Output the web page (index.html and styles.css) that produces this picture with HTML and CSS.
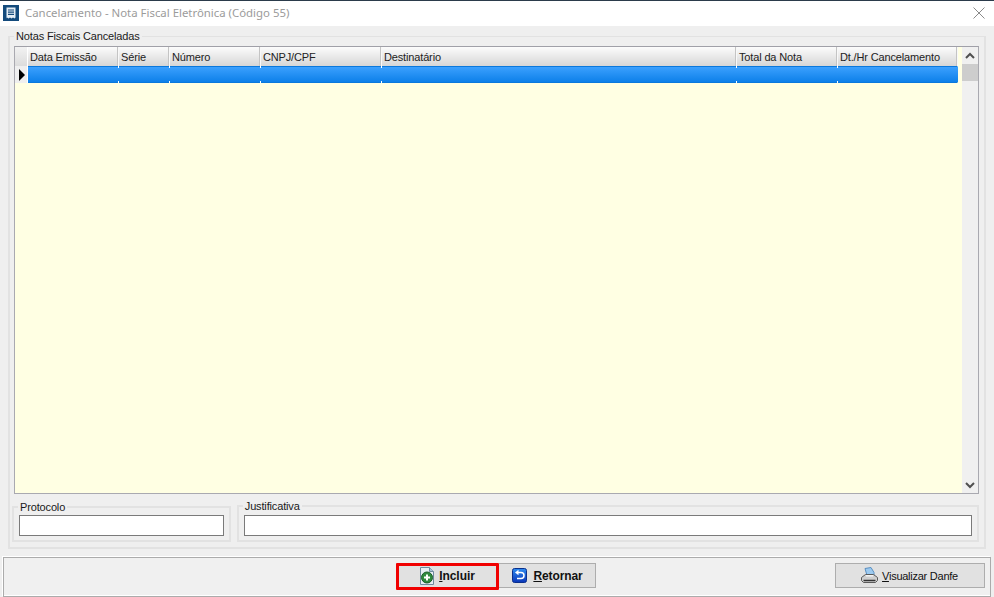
FILE: index.html
```html
<!DOCTYPE html>
<html lang="pt-BR">
<head>
<meta charset="utf-8">
<title>Cancelamento - Nota Fiscal Eletrônica (Código 55)</title>
<link rel="stylesheet" href="styles.css">
</head>
<body>
<div class="window">
  <header class="titlebar">
    <span class="app-icon">
      <svg width="16" height="16" viewBox="0 0 16 16"><path d="M3.500 2.500h9v10l-1 1-1.500-1-1.500 1-1.500-1-1.500 1-1.500-1-.5 1z" fill="#e4edf5"/><path d="M5 5h6M5 7.200h6M5 9.400h6" stroke="#134a7c" stroke-width="1.200"/></svg>
    </span>
    <span class="title">Cancelamento - Nota Fiscal Eletrônica (Código 55)</span>
    <svg class="close" width="12" height="12" viewBox="0 0 12 12"><path d="M.5.5l11 11M11.500.5l-11 11" stroke="#8a8a8a" stroke-width="1" fill="none"/></svg>
  </header>

  <main class="content">
    <section class="group main-group">
      <div class="legend">Notas Fiscais Canceladas</div>
      <div class="grid">
        <div class="grid-table">
          <div class="grid-head">
            <div class="indicator-head"></div>
            <div class="th c1">Data Emissão</div>
            <div class="th c2">Série</div>
            <div class="th c3">Número</div>
            <div class="th c4">CNPJ/CPF</div>
            <div class="th c5">Destinatário</div>
            <div class="th c6">Total da Nota</div>
            <div class="th c7">Dt./Hr Cancelamento</div>
          </div>
          <div class="grid-row">
            <div class="indicator"><span class="arrow"></span></div>
            <div class="td c1"></div>
            <div class="td c2"></div>
            <div class="td c3"></div>
            <div class="td c4"></div>
            <div class="td c5"></div>
            <div class="td c6"></div>
            <div class="td c7"></div>
          </div>
        </div>
        <div class="scrollbar">
          <svg class="sb-arrow" width="16" height="17" viewBox="0 0 16 17"><path d="M4 11l4-4 4 4" stroke="#505050" stroke-width="2" fill="none"/></svg>
          <div class="thumb"></div>
          <div class="sb-track"></div>
          <svg class="sb-arrow" width="16" height="17" viewBox="0 0 16 17"><path d="M4 7l4 4 4-4" stroke="#505050" stroke-width="2" fill="none"/></svg>
        </div>
      </div>
      <div class="fields">
        <section class="group field-protocolo">
          <div class="legend">Protocolo</div>
          <div class="input"></div>
        </section>
        <section class="group field-justificativa">
          <div class="legend">Justificativa</div>
          <div class="input"></div>
        </section>
      </div>
    </section>
  </main>

  <footer class="toolbar">
    <div class="center-buttons">
      <button class="btn btn-include">
        <svg width="14" height="18" viewBox="0 0 14 18"><path d="M.5.500h9l4 4v13H.5z" fill="#e6eef4" stroke="#6f8a9e"/><path d="M9.500.500v4h4" fill="#a9c4d8" stroke="#6f8a9e"/><circle cx="7" cy="10.500" r="5.500" fill="#2f8a3e" stroke="#1b5e2a"/><path d="M7 7.500v6M4 10.500h6" stroke="#fff" stroke-width="2"/></svg>
        <span><u>I</u>ncluir</span>
      </button>
      <button class="btn btn-return">
        <svg width="15" height="15" viewBox="0 0 15 15"><defs><linearGradient id="blue" x1="0" y1="0" x2="0" y2="1"><stop offset="0" stop-color="#2f8cf0"/><stop offset="1" stop-color="#0a35b8"/></linearGradient></defs><rect x=".5" y=".5" width="14" height="14" rx="2" fill="url(#blue)" stroke="#0a2f8c"/><path d="M5.500 4.500h3.500a2.750 2.750 0 0 1 0 6H5" fill="none" stroke="#fff" stroke-width="1.500"/><path d="M6.500 1.800L3 4.500l3.500 2.700z" fill="#fff"/></svg>
        <span><u>R</u>etornar</span>
      </button>
    </div>
    <button class="btn btn-danfe">
      <svg width="17" height="17" viewBox="0 0 17 17"><path d="M4 1.500l6-1 3 5v3H6z" fill="#9ccaf0" stroke="#5b8fc0"/><path d="M.5 10.500l4-3h8l4 3v3l-2 2h-12l-2-2z" fill="#cfcfcf" stroke="#5a5a5a"/><path d="M2.500 13.500h12" stroke="#333" stroke-width="1.500"/><path d="M5 8.800h7" stroke="#f4f4f4" stroke-width="1.500"/></svg>
      <span class="danfe-label"><u>V</u>isualizar Danfe</span>
    </button>
  </footer>
</div>
</body>
</html>
```
FILE: styles.css
```css
* { box-sizing: border-box; }
html, body { margin: 0; height: 100%; }
body { background: #efefef; font-family: "Liberation Sans", Arial, sans-serif; font-size: 11px; letter-spacing: -.15px; color: #1a1a1a; overflow: hidden; }

.window { width: 994px; height: 597px; display: flex; flex-direction: column; border-top: 1px solid #2b3b4b; }

.titlebar { height: 25px; flex: none; background: #fff; display: flex; align-items: center; padding: 0 9px 2px 3px; }
.app-icon { width: 16px; height: 16px; background: #134a7c; display: flex; margin-right: 6px; }
.title { flex: 1; font-family: "Noto Sans", sans-serif; font-size: 11.400px; letter-spacing: 0; color: #9b9b9b; }
.close { display: block; }

.content { flex: 1; padding: 10px 8px 8px 8px; }

.group { border: 2px solid #e2e2e2; }
.legend { width: fit-content; margin: -7px 0 0 0; padding: 0 2px; background: #efefef; line-height: 13px; height: 13px; color: #1a1a1a; }

.main-group { height: 513px; padding: 0 5px 0 4px; border-width: 1px 2px 2px 2px; }

.grid { height: 448px; margin-top: 3px; border: 1px solid #a9a9b0; border-top-color: #a0a0a8; background: #ffffe3; display: flex; }
.grid-table { flex: 1; display: flex; flex-direction: column; }

.grid-head, .grid-row { display: flex; }
.grid-head { height: 19px; width: 943px; }
.indicator-head { width: 13px; background: linear-gradient(#f2f2f2, #dcdcdc); border-right: 1px solid #fff; }
.th { height: 19px; padding: 2px 0 0 2px; background: linear-gradient(#fcfcfc, #d6d6d6); border-right: 1px solid #f8f8f8; box-shadow: inset -1px 0 0 #c4c4c4; line-height: 17px; white-space: nowrap; color: #222; }
.c1 { width: 91px; }
.c2 { width: 51px; }
.c3 { width: 91px; }
.c4 { width: 121px; }
.c5 { width: 355px; }
.c6 { width: 101px; }
.c7 { width: 120px; }

.grid-row { height: 17px; width: 943px; }
.indicator { width: 13px; background: #efefef; border-right: 1px solid #fff; display: flex; align-items: center; padding-left: 4px; }
.arrow { width: 0; height: 0; border-left: 6px solid #000; border-top: 6px solid transparent; border-bottom: 6px solid transparent; }
.td { height: 17px; background: linear-gradient(#3ea2ff, #0a7ee8); background-origin: border-box; border-top: 1px solid #0a78dc; border-bottom: 1px solid #0a78dc; border-right: 1px solid transparent; position: relative; }
.td::after { content: ""; position: absolute; right: -1px; top: -1px; width: 1px; height: 2px; background: #fff; }
.td::before { content: ""; position: absolute; right: -1px; bottom: -1px; width: 1px; height: 2px; background: #fff; }
.td.c7::after, .td.c7::before { display: none; }

.scrollbar { width: 16px; margin: 0 0 0 4px; background: #f0f0f0; display: flex; flex-direction: column; }
.sb-arrow { display: block; flex: none; }
.thumb { height: 17px; background: #cdcdcd; flex: none; }
.sb-track { flex: 1; }

.fields { display: flex; gap: 6px; margin: 11px 0 0 -2px; }
.field-protocolo { width: 219px; height: 36px; padding: 0 5px; margin-top: 1px; }
.field-protocolo .legend { margin-left: -1px; }
.field-justificativa { width: 743px; height: 37px; padding: 0 5px; }
.field-justificativa .legend { margin-left: -1px; }
.input { height: 21px; background: #fff; border: 1px solid #7a7a7a; }
.field-protocolo .input { margin-top: 1px; }
.field-justificativa .input { margin-top: 2px; }

.toolbar { flex: none; height: 40px; margin: 0 3px 0 3px; border: 1px solid #ababab; background: #f0f0f0; display: flex; padding: 5px 5px 0 0; box-shadow: -1px -1px 0 #fff, inset 0 -1px 0 #fff; }
.center-buttons { display: flex; margin-left: 392px; flex: 1; align-items: flex-start; }

.btn { height: 25px; background: #e1e1e1; border: 1px solid #adadad; display: flex; align-items: center; justify-content: center; font-family: inherit; font-size: 11px; color: #111; padding: 0; }
.btn-include { width: 103px; height: 27px; border: 3px solid #f00000; border-radius: 1px; gap: 5px; font-size: 12px; font-weight: bold; letter-spacing: -.05px; padding-bottom: 2px; }
.btn-return { width: 97px; font-size: 12px; font-weight: bold; border-left: 0; gap: 6px; letter-spacing: -.1px; padding-left: 1px; }
.btn-danfe { width: 150px; gap: 4px; letter-spacing: -.25px; padding-right: 1px; }
```
